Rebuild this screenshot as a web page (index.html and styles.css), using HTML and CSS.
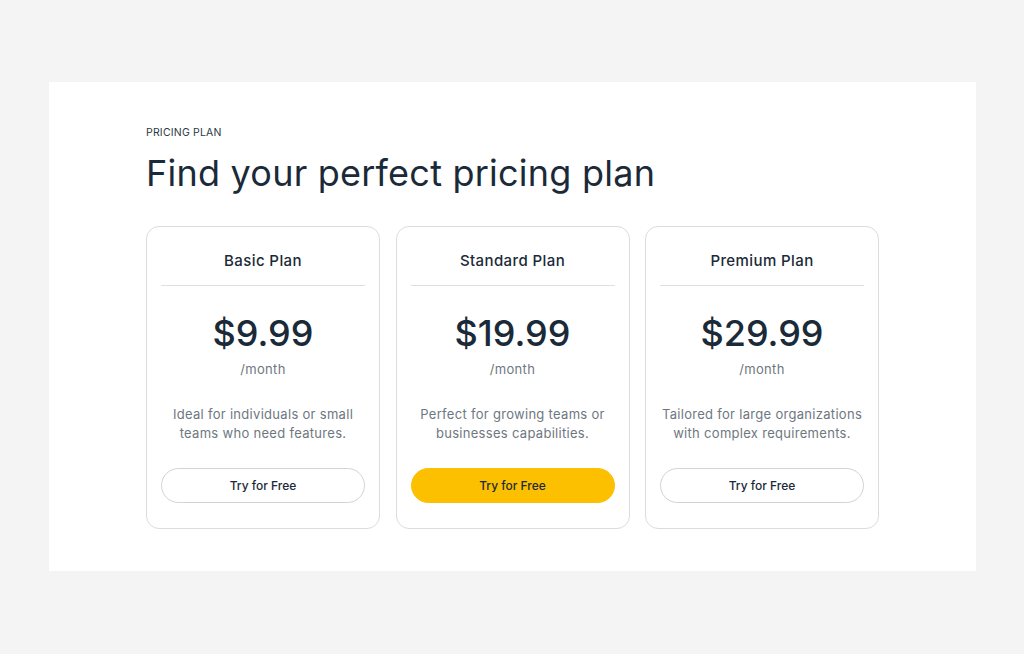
FILE: index.html
```html
<!DOCTYPE html>
<html lang="en">
<head>
<meta charset="utf-8">
<title>Pricing Plan</title>
<link rel="stylesheet" href="styles.css">
</head>
<body>
<section class="panel">
  <p class="eyebrow">PRICING PLAN</p>
  <h1 class="title">Find your perfect pricing plan</h1>
  <div class="cards">
    <article class="card">
      <h2 class="plan">Basic Plan</h2>
      <div class="price">$9.99</div>
      <div class="period">/month</div>
      <p class="desc">Ideal for individuals or small teams who need features.</p>
      <button class="btn">Try for Free</button>
    </article>
    <article class="card">
      <h2 class="plan">Standard Plan</h2>
      <div class="price">$19.99</div>
      <div class="period">/month</div>
      <p class="desc">Perfect for growing teams or businesses capabilities.</p>
      <button class="btn btn-primary">Try for Free</button>
    </article>
    <article class="card">
      <h2 class="plan">Premium Plan</h2>
      <div class="price">$29.99</div>
      <div class="period">/month</div>
      <p class="desc">Tailored for large organizations with complex requirements.</p>
      <button class="btn">Try for Free</button>
    </article>
  </div>
</section>
</body>
</html>
```

FILE: styles.css
```css
* { box-sizing: border-box; }
html, body { margin: 0; padding: 0; }
body {
  background: #f4f4f4;
  font-family: "Inter", "Noto Sans", sans-serif;
  color: #1b2a38;
  padding: 82px 48px 83px 49px;
}
.panel {
  background: #ffffff;
  width: 927px;
  height: 489px;
  padding: 44px 97px 0 97px;
}
.eyebrow {
  margin: 0;
  font-size: 10.5px;
  line-height: 13px;
  color: #2e3a45;
  letter-spacing: 0.2px;
}
.title {
  margin: 12px 0 0 0;
  font-size: 36px;
  line-height: 44px;
  font-weight: 400;
  color: #1b2a38;
  letter-spacing: 0.23px;
}
.cards {
  margin-top: 31px;
  display: flex;
  gap: 15.5px;
}
.card {
  width: 234.5px;
  height: 303px;
  border: 1px solid #d9dde1;
  border-radius: 13px;
  padding: 0 14px;
  display: flex;
  flex-direction: column;
  align-items: stretch;
  text-align: center;
}
.plan {
  margin: 0;
  height: 59px;
  padding-top: 24px;
  font-size: 15px;
  line-height: 20px;
  font-weight: 500;
  color: #1b2a38;
  letter-spacing: 0.4px;
  border-bottom: 1px solid #dde1e4;
}
.price {
  margin-top: 25px;
  font-size: 36px;
  line-height: 44px;
  font-weight: 500;
  color: #1b2a38;
}
.period {
  margin-top: 5px;
  font-size: 13px;
  line-height: 18px;
  color: #6e7780;
  letter-spacing: 0.3px;
}
.desc {
  margin: 27px 0 0 0;
  font-size: 13px;
  line-height: 19px;
  color: #6e7780;
  letter-spacing: 0.3px;
}
.btn {
  margin-top: 25px;
  height: 35px;
  border-radius: 18px;
  border: 1px solid #cfd4d9;
  background: #ffffff;
  font-family: inherit;
  font-size: 12px;
  font-weight: 500;
  color: #1b2a38;
}
.btn-primary {
  background: #fdc000;
  border-color: #fdc000;
}
```
